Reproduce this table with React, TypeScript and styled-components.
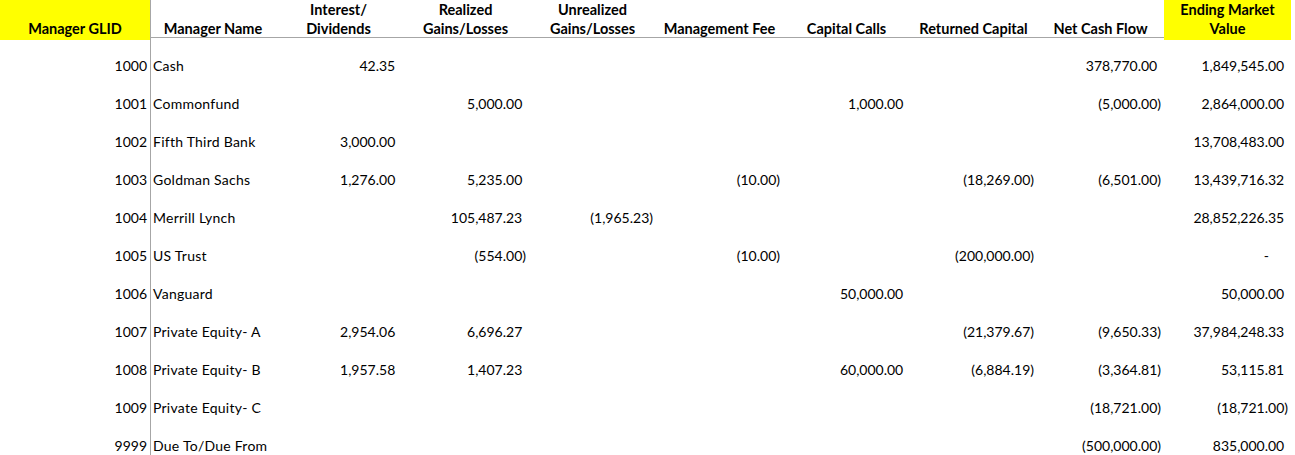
import React from "react";
import styled, { createGlobalStyle } from "styled-components";

const GlobalStyle = createGlobalStyle`
  html, body { margin: 0; padding: 0; background: #ffffff; }
  body { font-family: Lato, "Open Sans", sans-serif; color: #000; }
`;

const COLS = "151px 124px repeat(8, 127px)";

const Sheet = styled.div`
  display: flex;
  flex-direction: column;
  width: 1291px;
  font-family: Lato, "Open Sans", sans-serif;
  font-size: 14px;
  color: #000;
`;

const HeaderRow = styled.div`
  display: grid;
  grid-template-columns: ${COLS};
  height: 38px;
  border-bottom: 1px solid #a6a6a6;
  box-sizing: border-box;
`;

const HeaderCell = styled.div<{ $highlight?: boolean; $divider?: boolean }>`
  display: flex;
  align-items: flex-end;
  justify-content: center;
  text-align: center;
  font-weight: 700;
  font-size: 14.5px;
  line-height: 19px;
  padding-bottom: 2px;
  box-sizing: border-box;
  background: ${(p) => (p.$highlight ? "#ffff00" : "transparent")};
  border-right: ${(p) => (p.$divider ? "1px solid #a6a6a6" : "none")};
  white-space: pre-line;
`;

const Row = styled.div`
  display: grid;
  grid-template-columns: ${COLS};
  height: 38px;
`;

const Cell = styled.div<{ $align?: "left" | "right"; $divider?: boolean }>`
  display: flex;
  align-items: flex-end;
  justify-content: ${(p) => (p.$align === "left" ? "flex-start" : "flex-end")};
  line-height: 17px;
  padding-bottom: 2px;
  padding-left: ${(p) => (p.$align === "left" ? "2px" : "0")};
  padding-right: ${(p) => (p.$align === "left" ? "0" : "3px")};
  letter-spacing: ${(p) => (p.$align === "left" ? "0.25px" : "0")};
  box-sizing: border-box;
  border-right: ${(p) => (p.$divider ? "1px solid #a6a6a6" : "none")};
  white-space: nowrap;
`;

const Hidden = styled.span`
  visibility: hidden;
`;

const Dash = styled.span`
  padding-right: 19px;
`;

const headers = [
  "Interest/\nDividends",
  "Realized\nGains/Losses",
  "Unrealized\nGains/Losses",
  "Management Fee",
  "Capital Calls",
  "Returned Capital",
  "Net Cash Flow",
];

type RowData = { id: string; name: string; v: (string | null)[] };

const rows: RowData[] = [
  { id: "1000", name: "Cash", v: ["42.35", null, null, null, null, null, "378,770.00", "1,849,545.00"] },
  { id: "1001", name: "Commonfund", v: [null, "5,000.00", null, null, "1,000.00", null, "(5,000.00)", "2,864,000.00"] },
  { id: "1002", name: "Fifth Third Bank", v: ["3,000.00", null, null, null, null, null, null, "13,708,483.00"] },
  { id: "1003", name: "Goldman Sachs", v: ["1,276.00", "5,235.00", null, "(10.00)", null, "(18,269.00)", "(6,501.00)", "13,439,716.32"] },
  { id: "1004", name: "Merrill Lynch", v: [null, "105,487.23", "(1,965.23)", null, null, null, null, "28,852,226.35"] },
  { id: "1005", name: "US Trust", v: [null, "(554.00)", null, "(10.00)", null, "(200,000.00)", null, "-"] },
  { id: "1006", name: "Vanguard", v: [null, null, null, null, "50,000.00", null, null, "50,000.00"] },
  { id: "1007", name: "Private Equity- A", v: ["2,954.06", "6,696.27", null, null, null, "(21,379.67)", "(9,650.33)", "37,984,248.33"] },
  { id: "1008", name: "Private Equity- B", v: ["1,957.58", "1,407.23", null, null, "60,000.00", "(6,884.19)", "(3,364.81)", "53,115.81"] },
  { id: "1009", name: "Private Equity- C", v: [null, null, null, null, null, null, "(18,721.00)", "(18,721.00)"] },
  { id: "9999", name: "Due To/Due From", v: [null, null, null, null, null, null, "(500,000.00)", "835,000.00"] },
];

function Amount({ value }: { value: string | null }) {
  if (value === null) return null;
  if (value === "-") return <Dash>-</Dash>;
  if (value.startsWith("(")) return <span>{value}</span>;
  return (
    <span>
      {value}
      <Hidden>)</Hidden>
    </span>
  );
}

export default function App() {
  return (
    <>
      <GlobalStyle />
      <Sheet>
        <HeaderRow>
          <HeaderCell $highlight $divider>Manager GLID</HeaderCell>
          <HeaderCell>Manager Name</HeaderCell>
          {headers.map((h) => (
            <HeaderCell key={h}>{h}</HeaderCell>
          ))}
          <HeaderCell $highlight>{"Ending Market\nValue"}</HeaderCell>
        </HeaderRow>
        {rows.map((r) => (
          <Row key={r.id}>
            <Cell $divider>{r.id}</Cell>
            <Cell $align="left">{r.name}</Cell>
            {r.v.map((val, i) => (
              <Cell key={i}>
                <Amount value={val} />
              </Cell>
            ))}
          </Row>
        ))}
      </Sheet>
    </>
  );
}
